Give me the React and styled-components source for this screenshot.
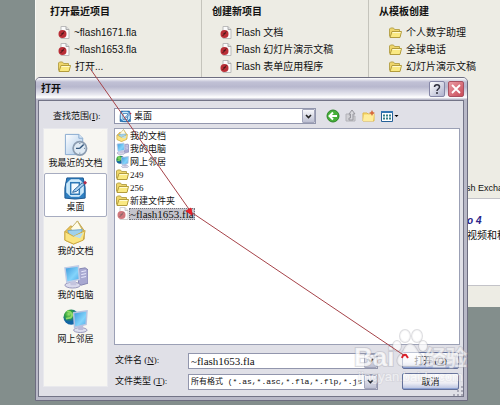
import React from 'react';
import styled, { createGlobalStyle, css } from 'styled-components';

const sans = '"Liberation Sans", "Noto Sans CJK SC", sans-serif';
const serif = '"Liberation Serif", "Noto Sans CJK SC", serif';
const mono = '"Liberation Mono", "Noto Sans CJK SC", monospace';

const Global = createGlobalStyle`
  * { box-sizing: border-box; }
  body { margin: 0; background: #838e8c; color: #111; font: 10px/16px ${sans}; }
  button, input, select { font: inherit; color: inherit; margin: 0; padding: 0; }
  ul { list-style: none; margin: 0; padding: 0; }
`;

const Page = styled.main`
  position: relative;
  min-height: 100vh;
  padding-left: 35px;
  overflow: hidden;
`;

const StartPanel = styled.section`
  min-height: 307px;
  background: #edece4;
  border-left: 1px solid #f8f8f4;
  display: flex;
  flex-direction: column;
`;

const Columns = styled.div`
  display: grid;
  grid-template-columns: 165px 167px 1fr;
  height: 177px;
`;

const Column = styled.section`
  padding: 4px 0 0 14px;
  & + & { border-left: 1px solid #c5c4bc; padding-left: 10px; }
  white-space: nowrap;
  overflow: hidden;
`;

const Heading = styled.h2`
  margin: 0 0 4px;
  font-size: 10px;
  line-height: 16px;
`;

const Entry = styled.a`
  display: flex;
  align-items: center;
  gap: 4px;
  height: 17px;
  padding-left: ${p => (p.$indent ? 10 : 8)}px;
  color: inherit;
  text-decoration: none;
`;

const Exchange = styled.p`
  margin: 0;
  padding: 3px 0 0 430px;
  height: 21px;
  font-size: 9px;
  white-space: nowrap;
`;

const Promo = styled.article`
  height: 88px;
  padding: 15px 0 0 431px;
  background: #fff;
  border: solid #c3c3c8;
  border-width: 1px 0;
  white-space: nowrap;
  line-height: 15px;
  p { margin: 0; }
`;

const PromoTitle = styled.h3`
  margin: 0;
  color: #29238a;
  font: italic bold 10px/14px ${sans};
`;

const Dialog = styled.section`
  position: absolute;
  top: 77px;
  left: 35px;
  right: 32px;
  border: 1px solid #6d6d80;
  border-radius: 5px 5px 0 0;
  background: #b9b9c8;
  padding: 0 3px 3px 2px;
  font: 9px/13px ${serif};
`;

const TitleBar = styled.header`
  display: flex;
  align-items: center;
  gap: 3px;
  height: 22px;
  margin: 0 -3px 0 -2px;
  padding: 0 3px 0 5px;
  border-radius: 4px 4px 0 0;
  background: linear-gradient(#fff, #c1c1d5 18%, #b8b8ce 40%, #e8e8f0 75%, #fff 88%, #a9a9bd);
  h1 { flex: 1; margin: 0; font: bold 10px/16px ${sans}; }
`;

const CaptionButton = styled.button`
  width: 16px;
  height: 16px;
  border: 1px solid ${p => (p.$close ? '#a85061' : '#8586a6')};
  border-radius: 2px;
  background: ${p => (p.$close ? 'linear-gradient(135deg, #e99aa3, #c94b58)' : 'linear-gradient(135deg, #fff, #aeb1cd)')};
  svg { display: block; }
`;

const Body = styled.div`
  display: grid;
  grid-template-columns: 65px 1fr;
  column-gap: 6px;
  padding: 7px 3px 6px 4px;
  border: 1px solid #737487;
  background: #e0e0e7;
`;

const LookIn = styled.div`
  grid-column: 1 / -1;
  display: grid;
  grid-template-columns: 61px 202px 1fr;
  column-gap: 10px;
  align-items: center;
  height: 20px;
  padding-bottom: 5px;
  label { padding-left: 10px; white-space: nowrap; }
`;

const Field = styled.div`
  display: flex;
  align-items: center;
  height: 16px;
  border: 1px solid #9296ad;
  background: #fff;
  min-width: 0;
  ${p => p.$icon && css`padding-left: 4px;`}
`;

const control = css`
  flex: 1;
  min-width: 0;
  height: 14px;
  border: 0;
  background: transparent;
  appearance: none;
  outline: 0;
  line-height: 14px;
`;

const TextInput = styled.input`
  && { ${control} padding-left: 2px; font-size: 11px; }
`;

const Select = styled.select`
  && {
    ${control}
    padding-left: 2px;
    text-overflow: clip;
    ${p => p.$mono && css`font-family: ${mono}; font-size: 8px;`}
  }
`;

const Arrow = styled.span`
  display: grid;
  place-items: center;
  flex: none;
  width: 13px;
  height: 14px;
  border: 1px solid #a2a5ba;
  border-radius: 1px;
  background: linear-gradient(#f8f8fb, #bcbfd2);
`;

const Tools = styled.nav`
  display: flex;
  align-items: center;
  gap: 4px;
`;

const Tool = styled.button`
  border: 0;
  width: ${p => (p.$wide ? 20 : 14)}px;
  height: 14px;
  background: none;
  svg { display: block; }
`;

const Places = styled.nav`
  height: 259px;
  background: #f7f6f2;
  border: 1px solid #e9e9ed;
`;

const Place = styled.button`
  display: flex;
  flex-direction: column;
  align-items: center;
  justify-content: flex-end;
  width: 100%;
  height: 44px;
  padding-bottom: 2px;
  border: 1px solid ${p => (p.$active ? '#a7acc0' : 'transparent')};
  border-radius: 2px;
  background: ${p => (p.$active ? '#fff' : 'none')};
  white-space: nowrap;
  svg { flex: none; }
`;

const Main = styled.div`
  display: flex;
  flex-direction: column;
  min-width: 0;
`;

const FileList = styled.ul`
  && { padding: 0 1px; }
  height: 217px;
  background: #fff;
  border: 1px solid #9ba0b5;
`;

const FileRow = styled.li`
  display: flex;
  align-items: center;
  height: 13px;
  white-space: nowrap;
  svg { flex: none; }
`;

const IconSlot = styled.span`
  display: grid;
  place-items: center;
  width: 13px;
  height: 13px;
`;

const FileName = styled.span`
  line-height: 12px;
  padding: 0 1px;
  ${p => p.$selected && css`
    background: #c4c4cc;
    outline: 1px dotted #77777f;
    outline-offset: -1px;
    font-size: 11px;
  `}
`;

const Form = styled.form`
  display: grid;
  grid-template-columns: 73px 190px 1fr;
  align-items: center;
  row-gap: 4px;
  padding: 7px 1px 0 1px;
`;

const PushButton = styled.button`
  justify-self: end;
  width: 57px;
  height: 17px;
  border: 1px solid #63709a;
  border-radius: 2px;
  background: linear-gradient(#fff, #eeeef5 60%, #b4bfdf);
  box-shadow: inset 0 -1px #8da1d2;
  line-height: 14px;
`;

const Overlay = styled.svg`
  position: absolute;
  top: 0;
  left: 0;
  pointer-events: none;
`;

const Grip = styled.svg`
  position: absolute;
  right: 4px;
  bottom: 4px;
`;

function FlashIcon({ pale }) {
  return (
    <svg width="12" height="13" viewBox="0 0 12 13" opacity={pale ? 0.65 : 1}>
      <path d="M3 .5h5l3 3v9H3z" fill="#fbfbfb" stroke="#bbb" />
      <path d="M8 .5v3h3" fill="#ddd" stroke="#aaa" />
      <circle cx="4.5" cy="8" r="4" fill="#b92e36" />
      <path d="M6.5 5.5c-2 0-1.500 4-4 4M3.500 7.500h2" fill="none" stroke="#491719" />
    </svg>
  );
}

function Folder() {
  return (
    <svg width="13" height="12" viewBox="0 0 13 12">
      <path d="M.5 9.500V2l1-1h3l1 1.500h5V5" fill="#efd66b" stroke="#b9a54e" />
      <path d="m1 10.500 2-6h9.500l-1.500 6z" fill="#fae982" stroke="#b39c3c" />
      <path d="M3.500 5.500h8" stroke="#fffad0" />
    </svg>
  );
}

function PlaceIcon({ kind, size = 25 }) {
  return (
    <svg width={size} height={size} viewBox="0 0 26 26">
      <defs>
        <linearGradient id="screen" x2="1" y2="1"><stop stopColor="#3895d9" /><stop offset=".6" stopColor="#83d4fb" /><stop offset="1" stopColor="#4ba5e5" /></linearGradient>
        <linearGradient id="sheet" x2="1" y2="1"><stop stopColor="#fff" /><stop offset="1" stopColor="#a5c6e8" /></linearGradient>
        <radialGradient id="globe" cx=".35" cy=".3"><stop stopColor="#9be36e" /><stop offset=".5" stopColor="#32a33d" /><stop offset="1" stopColor="#1264a4" /></radialGradient>
      </defs>
      {kind === 'recent' && (
        <>
          <path d="M2.500 2.500h14l4 4v17h-18z" fill="url(#sheet)" stroke="#86aacf" />
          <path d="M16.500 2.500v4h4" fill="#d7e7f7" stroke="#86aacf" />
          <circle cx="17.500" cy="17" r="7" fill="#dfeaf4" stroke="#8b9cb0" strokeWidth="1.800" />
          <path d="m17.500 17 4-4M17.500 17h-4" stroke="#34587e" strokeWidth="1.500" />
          <path d="M17.500 11.500v1m0 9v1m5.500-5.500h-1" stroke="#56738f" />
        </>
      )}
      {kind === 'desktop' && (
        <>
          <path d="M4 2h17q3 9 2 21-10 2-21 0Q1 12 4 2z" fill="#2f80c2" stroke="#1b5690" />
          <path d="M8 4h9l4 4v9l-4 4H8l-4-4V8z" fill="#c5e6f9" stroke="#e5f5ff" />
          <path d="M8 7h9v12H8z" fill="#f4fbff" stroke="#2e79b7" strokeWidth="1.500" />
          <path d="m11 15 9-8 2 2-8 7-4 1z" fill="#a6cff0" stroke="#28639b" />
          <path d="m21 7 2-2 2 2-2 2z" fill="#b42e4b" />
        </>
      )}
      {kind === 'documents' && (
        <>
          <path d="m2 12 6-6 3 2 4-7 7 10v9L11 25l-9-4z" fill="#eac253" stroke="#c5a143" />
          <path d="m8 9 7-8 6 11-8 6z" fill="#fffce8" stroke="#c3b36b" />
          <path d="m5 11 15-1-3 10-9 1z" fill="#9fd1ed" stroke="#72a8cb" />
          <path d="m2 12 9 5 12-6-2 10-10 4-9-4z" fill="#fae482" stroke="#cba843" />
          <path d="m11 17 10-4-3 6z" fill="#b8dff3" />
        </>
      )}
      {kind === 'computer' && (
        <>
          <path d="m17 5 6-1 3 2v14l-7 2-3-2z" fill="#a8a8d1" stroke="#8585b1" />
          <path d="m19 8 5-1m-5 4 5-1m-5 4 5-1" stroke="#ececff" />
          <ellipse cx="10" cy="22" rx="8" ry="3" fill="#dadaec" stroke="#9695b9" />
          <path d="m7 17 6-1 1 6H8z" fill="#c4c4de" />
          <path d="m2 4 14-2 1 14-13 3z" fill="url(#screen)" stroke="#c0cce6" strokeWidth="1.500" />
        </>
      )}
      {kind === 'network' && (
        <>
          <circle cx="8.500" cy="9.500" r="8" fill="url(#globe)" />
          <path d="M4 3c5 1 7 4 4 7l-5 1" fill="none" stroke="#8fdb68" strokeWidth="2" />
          <ellipse cx="18" cy="23" rx="7" ry="2.500" fill="#dedeee" stroke="#9999bb" />
          <path d="m15 18 6-1v6h-5z" fill="#bbbbda" />
          <path d="m11 5 14-2-1 14-12 3z" fill="url(#screen)" stroke="#b7c3e0" strokeWidth="1.500" />
        </>
      )}
    </svg>
  );
}

const Chevron = () => (
  <svg width="7" height="5" viewBox="0 0 7 5"><path d="m1 1 2.500 2.500L6 1" fill="none" stroke="#222" strokeWidth="1.600" /></svg>
);

const columns = [
  { title: '打开最近项目', items: [['flash', '~flash1671.fla'], ['flash', '~flash1653.fla'], ['folder', '打开...']] },
  { title: '创建新项目', items: [['flash', 'Flash 文档'], ['flash', 'Flash 幻灯片演示文稿'], ['flash', 'Flash 表单应用程序']] },
  { title: '从模板创建', indent: true, items: [['folder', '个人数字助理'], ['folder', '全球电话'], ['folder', '幻灯片演示文稿']] },
];
const places = [['recent', '我最近的文档'], ['desktop', '桌面'], ['documents', '我的文档'], ['computer', '我的电脑'], ['network', '网上邻居']];
const files = [['documents', '我的文档'], ['computer', '我的电脑'], ['network', '网上邻居'], ['folder', '249'], ['folder', '256'], ['folder', '新建文件夹'], ['flash', '~flash1653.fla']];

function FileIcon({ kind }) {
  if (kind === 'folder') return <Folder />;
  if (kind === 'flash') return <FlashIcon pale />;
  return <PlaceIcon kind={kind} size={13} />;
}

function Toolbar() {
  return (
    <Tools>
      <Tool type="button" aria-label="后退">
        <svg width="14" height="14" viewBox="0 0 14 14"><circle cx="7" cy="7" r="6" fill="#46af38" stroke="#2b8526" /><path d="M3 7h8M7 3.500 3.500 7 7 10.500" fill="none" stroke="#fff" strokeWidth="2" /></svg>
      </Tool>
      <Tool type="button" aria-label="向上一级">
        <svg width="14" height="14" viewBox="0 0 14 14"><path d="M2 5h3l1 2h5v5H2z" fill="#d1d1d5" stroke="#b2b2b8" /><path d="M5 11h4V5h2L8 1 5 5h1.500v4H5z" fill="#d8d8dd" stroke="#97979e" /></svg>
      </Tool>
      <Tool type="button" aria-label="新建文件夹">
        <svg width="14" height="14" viewBox="0 0 14 14"><path d="M1 4h4l1 1h6v7H1z" fill="#f9dd72" stroke="#dfb747" /><path d="m2 6 10-1-1 7H1z" fill="#ffed9b" /><path d="m10 1 1 2 2 1-2 1-1 2-1-2-2-1 2-1z" fill="#d66a3c" /></svg>
      </Tool>
      <Tool type="button" aria-label="查看" $wide>
        <svg width="20" height="14" viewBox="0 0 20 14"><path d="M1.500 2.500h11v10h-11z" fill="#fff" stroke="#266198" /><path d="M1 2h12v2H1z" fill="#3477b3" /><path d="M3 6.500h2m1 0h2m1 0h2M3 9.500h2m1 0h2m1 0h2" stroke="#358087" strokeWidth="2" /><path d="M14.500 6h4l-2 2z" /></svg>
      </Tool>
    </Tools>
  );
}

function OpenDialog() {
  return (
    <Dialog role="dialog" aria-labelledby="dialog-title">
      <TitleBar>
        <h1 id="dialog-title">打开</h1>
        <CaptionButton type="button" aria-label="帮助">
          <svg width="14" height="14" viewBox="0 0 14 14"><path d="M4.500 5c0-3 5-3 5 0 0 2-2.500 2-2.500 4M7 10v2" fill="none" stroke="#30303d" strokeWidth="1.500" /></svg>
        </CaptionButton>
        <CaptionButton type="button" aria-label="关闭" $close>
          <svg width="14" height="14" viewBox="0 0 14 14"><path d="m3 3 8 8m0-8-8 8" stroke="#fff" strokeWidth="1.800" /></svg>
        </CaptionButton>
      </TitleBar>
      <Body>
        <LookIn>
          <label htmlFor="look-in">查找范围(<u>I</u>):</label>
          <Field $icon>
            <PlaceIcon kind="desktop" size={13} />
            <Select id="look-in"><option>桌面</option></Select>
            <Arrow><Chevron /></Arrow>
          </Field>
          <Toolbar />
        </LookIn>
        <Places>
          {places.map(([kind, label]) => (
            <Place type="button" key={kind} $active={kind === 'desktop'}><PlaceIcon kind={kind} />{label}</Place>
          ))}
        </Places>
        <Main>
          <FileList>
            {files.map(([kind, name]) => (
              <FileRow key={name}><IconSlot><FileIcon kind={kind} /></IconSlot><FileName $selected={kind === 'flash'}>{name}</FileName></FileRow>
            ))}
          </FileList>
          <Form onSubmit={e => e.preventDefault()}>
            <label htmlFor="file-name">文件名 (<u>N</u>):</label>
            <Field><TextInput id="file-name" defaultValue="~flash1653.fla" /><Arrow><Chevron /></Arrow></Field>
            <PushButton>打开 (<u>O</u>)</PushButton>
            <label htmlFor="file-type">文件类型 (<u>T</u>):</label>
            <Field><Select id="file-type" $mono><option>所有格式 (*.as,*.asc,*.fla,*.flp,*.js</option></Select><Arrow><Chevron /></Arrow></Field>
            <PushButton type="button">取消</PushButton>
          </Form>
        </Main>
      </Body>
      <Grip width="10" height="10" viewBox="0 0 10 10"><path d="M8 0h2v2H8zM4 4h2v2H4zM8 4h2v2H8zM0 8h2v2H0zM4 8h2v2H4zM8 8h2v2H8z" fill="#aaaab7" /></Grip>
    </Dialog>
  );
}

export default function App() {
  return (
    <Page>
      <Global />
      <StartPanel>
        <Columns>
          {columns.map(col => (
            <Column key={col.title}>
              <Heading>{col.title}</Heading>
              {col.items.map(([kind, label]) => (
                <Entry href="#" key={label} $indent={col.indent}>{kind === 'flash' ? <FlashIcon /> : <Folder />}{label}</Entry>
              ))}
            </Column>
          ))}
        </Columns>
        <Exchange>sh Exchange</Exchange>
        <Promo><PromoTitle>o 4</PromoTitle><p>视频和程</p></Promo>
      </StartPanel>
      <OpenDialog />
      <Overlay width="500" height="405" viewBox="0 0 500 405" aria-hidden="true">
        <g fill="#fff" fillOpacity=".75" stroke="#a9a9b2" strokeOpacity=".4" strokeWidth="2" paintOrder="stroke">
          <text x="354" y="366" fontFamily="Liberation Sans, sans-serif" fontWeight="bold" fontSize="26">Bai</text>
          <text x="425" y="365" fontFamily="Noto Sans CJK SC, sans-serif" fontWeight="bold" fontSize="21" fillOpacity=".6">经验</text>
          <text x="358" y="381" fontFamily="Liberation Sans, sans-serif" fontSize="13" fillOpacity=".6" strokeOpacity=".15">jingyan.baidu.com</text>
          <ellipse cx="405" cy="336" rx="5" ry="6" />
          <ellipse cx="417" cy="336" rx="5" ry="6" />
          <ellipse cx="397" cy="346" rx="4" ry="5" />
          <ellipse cx="423" cy="346" rx="4" ry="5" />
          <path d="M410 344c5 0 6 6 10 10 6 6 2 12-3 12h-14c-6 0-8-7-2-12 4-4 4-10 9-10z" fillOpacity=".6" />
        </g>
        <path d="m89 67 102 145 214 144" fill="none" stroke="#a64349" />
        <path d="m186 211 5-3 1 7z" fill="#ef1f29" stroke="#db2029" />
        <path d="M402 358q1-4 4-3l2 3" fill="none" stroke="#db2029" strokeWidth="2" />
      </Overlay>
    </Page>
  );
}
